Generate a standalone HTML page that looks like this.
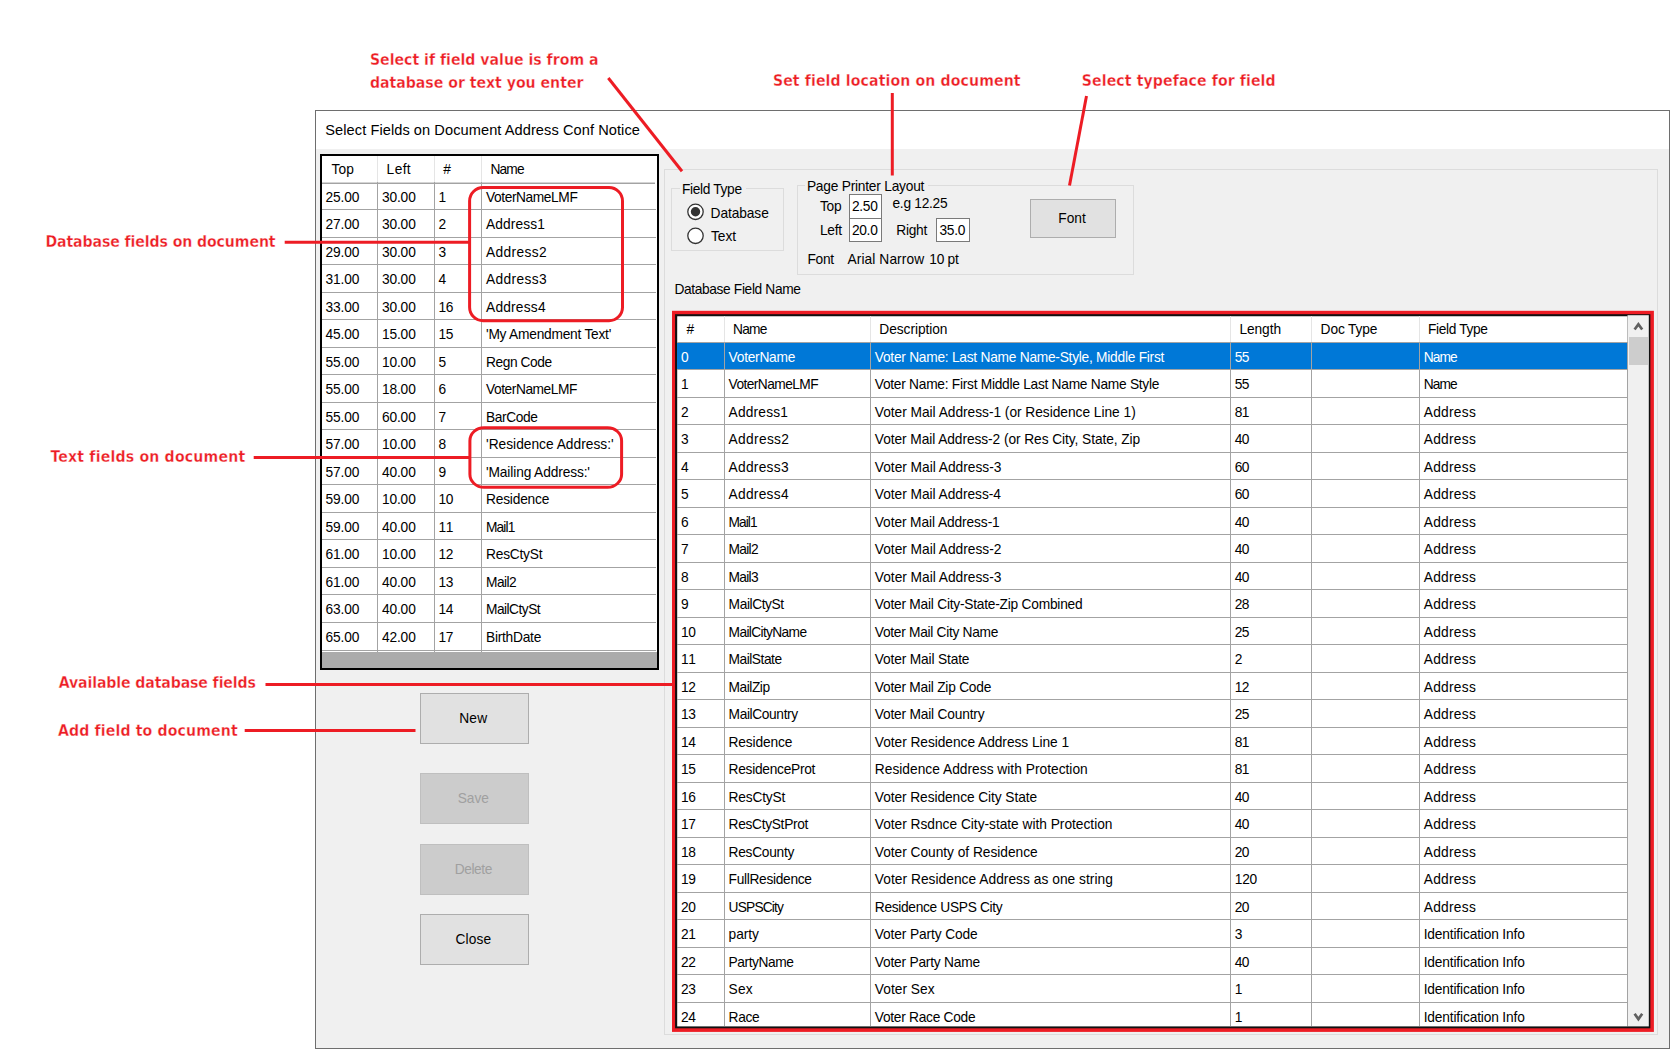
<!DOCTYPE html>
<html lang="en">
<head>
<meta charset="utf-8">
<title>Select Fields on Document Address Conf Notice</title>
<style>
html,body{margin:0;padding:0;background:#fff;}
body{width:1677px;height:1057px;position:relative;overflow:hidden;font-family:"Liberation Sans",sans-serif;font-size:13.75px;color:#000;letter-spacing:-0.28px;}
#app{position:absolute;left:0;top:0;width:1677px;height:1057px;overflow:hidden;}
#app div,#app span,#app label,#app button,#app h1,#app p{position:absolute;margin:0;padding:0;box-sizing:border-box;white-space:pre;line-height:1;font-size:13.75px;font-weight:normal;}
#app .ann{color:#ed1c24;font-family:"DejaVu Sans Condensed","DejaVu Sans","Liberation Sans",sans-serif;font-weight:bold;font-size:15.7px;-webkit-text-stroke:0.28px #fff;}
#app .title{font-size:14.6px;color:#000;letter-spacing:0.07px;}
#app .win{border:1px solid #6e6e6e;background:#f0f0f0;}
#app .gb{border:1px solid #dcdcdc;}
#app .gbl{background:#f0f0f0;}
#app .hl{background:#a3a3a3;height:1px;}
#app .vl{background:#a3a3a3;width:1px;}
#app .hvl{background:#e5e5e5;width:1px;}
#app .btn{background:#e1e1e1;border:1px solid #adadad;text-align:center;font-family:inherit;color:#000;letter-spacing:0.3px;padding:0 2px 0 0;overflow:hidden;}
#app .btn.dis{background:#cccccc;border-color:#bfbfbf;color:#a0a0a0;}
#app .inp{background:#fff;border:1px solid #7a7a7a;}
#app .sel{color:#fff;}
svg{position:absolute;left:0;top:0;}
</style>
</head>
<body>
<div id="app">

<div class="win" style="left:315.00px;top:110.00px;width:1355.00px;height:939.00px;"></div>
<div style="left:316.00px;top:111.00px;width:1353.00px;height:38.00px;background:#fff;"></div>
<h1 class="title" style="left:325.30px;top:122.92px;">Select Fields on Document Address Conf Notice</h1>
<div class="lb" style="left:320.00px;top:154.00px;width:339.00px;height:516.00px;background:#ababab;border:2px solid #000;"></div>
<div style="left:322.00px;top:156.00px;width:335.00px;height:496.00px;background:#fff;"></div>
<div class="hvl" style="left:377.00px;top:156.00px;width:1.00px;height:26.00px;"></div>
<div class="hvl" style="left:433.50px;top:156.00px;width:1.00px;height:26.00px;"></div>
<div class="hvl" style="left:480.75px;top:156.00px;width:1.00px;height:26.00px;"></div>
<span style="left:331.50px;top:163.36px;letter-spacing:0.120px;">Top</span>
<span style="left:386.60px;top:163.36px;letter-spacing:0.387px;">Left</span>
<span style="left:443.30px;top:163.36px;">#</span>
<span style="left:490.50px;top:163.36px;letter-spacing:-0.879px;">Name</span>
<div class="hl" style="left:322.00px;top:181.70px;width:333.00px;height:1.00px;background:#d4d4d4;"></div>
<div class="hl" style="left:322.00px;top:182.70px;width:332.60px;height:1.00px;"></div>
<div class="hl" style="left:322.00px;top:209.00px;width:334.00px;height:1.00px;"></div>
<div class="hl" style="left:322.00px;top:236.50px;width:334.00px;height:1.00px;"></div>
<div class="hl" style="left:322.00px;top:264.00px;width:334.00px;height:1.00px;"></div>
<div class="hl" style="left:322.00px;top:291.50px;width:334.00px;height:1.00px;"></div>
<div class="hl" style="left:322.00px;top:319.00px;width:334.00px;height:1.00px;"></div>
<div class="hl" style="left:322.00px;top:346.50px;width:334.00px;height:1.00px;"></div>
<div class="hl" style="left:322.00px;top:374.00px;width:334.00px;height:1.00px;"></div>
<div class="hl" style="left:322.00px;top:401.50px;width:334.00px;height:1.00px;"></div>
<div class="hl" style="left:322.00px;top:429.00px;width:334.00px;height:1.00px;"></div>
<div class="hl" style="left:322.00px;top:456.50px;width:334.00px;height:1.00px;"></div>
<div class="hl" style="left:322.00px;top:484.00px;width:334.00px;height:1.00px;"></div>
<div class="hl" style="left:322.00px;top:511.50px;width:334.00px;height:1.00px;"></div>
<div class="hl" style="left:322.00px;top:539.00px;width:334.00px;height:1.00px;"></div>
<div class="hl" style="left:322.00px;top:566.50px;width:334.00px;height:1.00px;"></div>
<div class="hl" style="left:322.00px;top:594.00px;width:334.00px;height:1.00px;"></div>
<div class="hl" style="left:322.00px;top:621.50px;width:334.00px;height:1.00px;"></div>
<div class="hl" style="left:322.00px;top:650.10px;width:334.00px;height:1.00px;"></div>
<div class="vl" style="left:377.00px;top:182.00px;width:1.00px;height:470.00px;"></div>
<div class="vl" style="left:433.50px;top:182.00px;width:1.00px;height:470.00px;"></div>
<div class="vl" style="left:480.75px;top:182.00px;width:1.00px;height:470.00px;"></div>
<span style="left:325.60px;top:190.80px;letter-spacing:-0.180px;">25.00</span>
<span style="left:381.90px;top:190.80px;letter-spacing:-0.130px;">30.00</span>
<span style="left:438.60px;top:190.80px;">1</span>
<span style="left:486.00px;top:190.80px;letter-spacing:-0.408px;">VoterNameLMF</span>
<span style="left:325.60px;top:218.30px;letter-spacing:-0.180px;">27.00</span>
<span style="left:381.90px;top:218.30px;letter-spacing:-0.130px;">30.00</span>
<span style="left:438.60px;top:218.30px;">2</span>
<span style="left:486.00px;top:218.30px;letter-spacing:0.118px;">Address1</span>
<span style="left:325.60px;top:245.80px;letter-spacing:-0.180px;">29.00</span>
<span style="left:381.90px;top:245.80px;letter-spacing:-0.130px;">30.00</span>
<span style="left:438.60px;top:245.80px;">3</span>
<span style="left:486.00px;top:245.80px;letter-spacing:0.350px;">Address2</span>
<span style="left:325.60px;top:273.30px;letter-spacing:-0.180px;">31.00</span>
<span style="left:381.90px;top:273.30px;letter-spacing:-0.130px;">30.00</span>
<span style="left:438.60px;top:273.30px;">4</span>
<span style="left:486.00px;top:273.30px;letter-spacing:0.350px;">Address3</span>
<span style="left:325.60px;top:300.80px;letter-spacing:-0.180px;">33.00</span>
<span style="left:381.90px;top:300.80px;letter-spacing:-0.130px;">30.00</span>
<span style="left:438.60px;top:300.80px;letter-spacing:-0.480px;">16</span>
<span style="left:486.00px;top:300.80px;letter-spacing:0.207px;">Address4</span>
<span style="left:325.60px;top:328.30px;letter-spacing:-0.180px;">45.00</span>
<span style="left:381.90px;top:328.30px;letter-spacing:-0.130px;">15.00</span>
<span style="left:438.60px;top:328.30px;letter-spacing:-0.480px;">15</span>
<span style="left:486.00px;top:328.30px;letter-spacing:-0.236px;">'My Amendment Text'</span>
<span style="left:325.60px;top:355.80px;letter-spacing:-0.180px;">55.00</span>
<span style="left:381.90px;top:355.80px;letter-spacing:-0.130px;">10.00</span>
<span style="left:438.60px;top:355.80px;">5</span>
<span style="left:486.00px;top:355.80px;letter-spacing:-0.433px;">Regn Code</span>
<span style="left:325.60px;top:383.30px;letter-spacing:-0.180px;">55.00</span>
<span style="left:381.90px;top:383.30px;letter-spacing:-0.130px;">18.00</span>
<span style="left:438.60px;top:383.30px;">6</span>
<span style="left:486.00px;top:383.30px;letter-spacing:-0.442px;">VoterNameLMF</span>
<span style="left:325.60px;top:410.80px;letter-spacing:-0.180px;">55.00</span>
<span style="left:381.90px;top:410.80px;letter-spacing:-0.130px;">60.00</span>
<span style="left:438.60px;top:410.80px;">7</span>
<span style="left:486.00px;top:410.80px;letter-spacing:-0.382px;">BarCode</span>
<span style="left:325.60px;top:438.30px;letter-spacing:-0.180px;">57.00</span>
<span style="left:381.90px;top:438.30px;letter-spacing:-0.130px;">10.00</span>
<span style="left:438.60px;top:438.30px;">8</span>
<span style="left:486.00px;top:438.30px;letter-spacing:0.003px;">'Residence Address:'</span>
<span style="left:325.60px;top:465.80px;letter-spacing:-0.180px;">57.00</span>
<span style="left:381.90px;top:465.80px;letter-spacing:-0.130px;">40.00</span>
<span style="left:438.60px;top:465.80px;">9</span>
<span style="left:486.00px;top:465.80px;letter-spacing:-0.127px;">'Mailing Address:'</span>
<span style="left:325.60px;top:493.30px;letter-spacing:-0.180px;">59.00</span>
<span style="left:381.90px;top:493.30px;letter-spacing:-0.130px;">10.00</span>
<span style="left:438.60px;top:493.30px;letter-spacing:-0.480px;">10</span>
<span style="left:486.00px;top:493.30px;letter-spacing:-0.202px;">Residence</span>
<span style="left:325.60px;top:520.80px;letter-spacing:-0.180px;">59.00</span>
<span style="left:381.90px;top:520.80px;letter-spacing:-0.130px;">40.00</span>
<span style="left:438.60px;top:520.80px;letter-spacing:0.520px;">11</span>
<span style="left:486.00px;top:520.80px;letter-spacing:-0.880px;">Mail1</span>
<span style="left:325.60px;top:548.30px;letter-spacing:-0.180px;">61.00</span>
<span style="left:381.90px;top:548.30px;letter-spacing:-0.130px;">10.00</span>
<span style="left:438.60px;top:548.30px;letter-spacing:-0.480px;">12</span>
<span style="left:486.00px;top:548.30px;letter-spacing:-0.224px;">ResCtySt</span>
<span style="left:325.60px;top:575.80px;letter-spacing:-0.180px;">61.00</span>
<span style="left:381.90px;top:575.80px;letter-spacing:-0.130px;">40.00</span>
<span style="left:438.60px;top:575.80px;letter-spacing:-0.480px;">13</span>
<span style="left:486.00px;top:575.80px;letter-spacing:-0.530px;">Mail2</span>
<span style="left:325.60px;top:603.30px;letter-spacing:-0.180px;">63.00</span>
<span style="left:381.90px;top:603.30px;letter-spacing:-0.130px;">40.00</span>
<span style="left:438.60px;top:603.30px;letter-spacing:-0.480px;">14</span>
<span style="left:486.00px;top:603.30px;letter-spacing:-0.530px;">MailCtySt</span>
<span style="left:325.60px;top:630.80px;letter-spacing:-0.180px;">65.00</span>
<span style="left:381.90px;top:630.80px;letter-spacing:-0.130px;">42.00</span>
<span style="left:438.60px;top:630.80px;letter-spacing:-0.480px;">17</span>
<span style="left:486.00px;top:630.80px;letter-spacing:-0.252px;">BirthDate</span>
<button class="btn" style="left:420.00px;top:693.00px;width:108.70px;height:50.90px;line-height:49.50px;letter-spacing:0.3px;">New</button>
<button class="btn dis" style="left:420.00px;top:773.20px;width:108.70px;height:50.80px;line-height:49.40px;letter-spacing:0.0px;">Save</button>
<button class="btn dis" style="left:420.00px;top:844.20px;width:108.70px;height:50.80px;line-height:49.40px;letter-spacing:-0.4px;">Delete</button>
<button class="btn" style="left:420.00px;top:914.40px;width:108.70px;height:50.80px;line-height:49.40px;letter-spacing:0.1px;">Close</button>
<div class="gb" style="left:664.00px;top:169.00px;width:993.50px;height:865.50px;"></div>
<div class="gb" style="left:671.25px;top:188.00px;width:112.50px;height:62.50px;"></div>
<div class="gbl" style="left:679.50px;top:180.00px;width:66.00px;height:16.00px;"></div>
<span style="left:682.00px;top:182.50px;letter-spacing:-0.346px;">Field Type</span>
<svg width="1677" height="1057" viewBox="0 0 1677 1057" style="pointer-events:none">
<circle cx="695.5" cy="211.8" r="7.7" fill="#fff" stroke="#333" stroke-width="1.3"/>
<circle cx="695.5" cy="211.8" r="4.7" fill="#333"/>
<circle cx="695.5" cy="235.8" r="7.7" fill="#fff" stroke="#333" stroke-width="1.3"/>
</svg>
<label style="left:710.60px;top:206.50px;letter-spacing:-0.093px;">Database</label>
<label style="left:711.00px;top:230.00px;letter-spacing:-0.013px;">Text</label>
<div class="gb" style="left:796.60px;top:185.40px;width:337.00px;height:89.20px;"></div>
<div class="gbl" style="left:804.50px;top:178.00px;width:123.50px;height:16.00px;"></div>
<span style="left:806.90px;top:179.60px;letter-spacing:-0.224px;">Page Printer Layout</span>
<span style="left:820.00px;top:199.60px;">Top</span>
<span style="left:820.00px;top:223.75px;">Left</span>
<div class="inp" style="left:849.00px;top:194.40px;width:33.00px;height:24.30px;"></div>
<div class="inp" style="left:849.00px;top:217.90px;width:33.00px;height:24.50px;"></div>
<div class="inp" style="left:936.00px;top:217.90px;width:33.50px;height:24.50px;"></div>
<span style="left:851.90px;top:199.60px;">2.50</span>
<span style="left:851.90px;top:223.75px;">20.0</span>
<span style="left:939.50px;top:223.75px;">35.0</span>
<span style="left:892.50px;top:196.50px;">e.g 12.25</span>
<span style="left:896.25px;top:223.75px;">Right</span>
<span style="left:807.50px;top:252.50px;">Font</span>
<span style="left:847.50px;top:252.50px;letter-spacing:0.09px;">Arial Narrow</span>
<span style="left:929.30px;top:252.50px;">10 pt</span>
<button class="btn" style="left:1030.00px;top:199.10px;width:86.00px;height:38.50px;line-height:37.10px;letter-spacing:0.0px;">Font</button>
<span style="left:674.40px;top:282.75px;letter-spacing:-0.358px;">Database Field Name</span>
<svg width="1677" height="1057" viewBox="0 0 1677 1057" style="pointer-events:none">
<rect x="672" y="310.8" width="981.9" height="721.1" fill="#ed1c24"/>
<rect x="675.07" y="314.2" width="975.3" height="714.1" fill="#111"/>
<rect x="677.2" y="316.25" width="950.3" height="710.15" fill="#fff"/>
<rect x="1627.5" y="315.2" width="21.3" height="711.2" fill="#f0f0f0"/>
</svg>
<div class="hvl" style="left:723.90px;top:316.00px;width:1.00px;height:26.00px;"></div>
<div class="hvl" style="left:870.00px;top:316.00px;width:1.00px;height:26.00px;"></div>
<div class="hvl" style="left:1230.00px;top:316.00px;width:1.00px;height:26.00px;"></div>
<div class="hvl" style="left:1311.10px;top:316.00px;width:1.00px;height:26.00px;"></div>
<div class="hvl" style="left:1418.70px;top:316.00px;width:1.00px;height:26.00px;"></div>
<span style="left:686.60px;top:323.16px;">#</span>
<span style="left:733.10px;top:323.16px;letter-spacing:-0.812px;">Name</span>
<span style="left:879.30px;top:323.16px;letter-spacing:-0.060px;">Description</span>
<span style="left:1239.40px;top:323.16px;letter-spacing:-0.080px;">Length</span>
<span style="left:1320.60px;top:323.16px;letter-spacing:-0.137px;">Doc Type</span>
<span style="left:1428.00px;top:323.16px;letter-spacing:-0.367px;">Field Type</span>
<div style="left:677.00px;top:342.30px;width:950.00px;height:26.90px;background:#0078d7;"></div>
<div class="hl" style="left:677.00px;top:369.21px;width:950.00px;height:1.00px;"></div>
<div class="hl" style="left:677.00px;top:396.72px;width:950.00px;height:1.00px;"></div>
<div class="hl" style="left:677.00px;top:424.23px;width:950.00px;height:1.00px;"></div>
<div class="hl" style="left:677.00px;top:451.74px;width:950.00px;height:1.00px;"></div>
<div class="hl" style="left:677.00px;top:479.25px;width:950.00px;height:1.00px;"></div>
<div class="hl" style="left:677.00px;top:506.76px;width:950.00px;height:1.00px;"></div>
<div class="hl" style="left:677.00px;top:534.27px;width:950.00px;height:1.00px;"></div>
<div class="hl" style="left:677.00px;top:561.78px;width:950.00px;height:1.00px;"></div>
<div class="hl" style="left:677.00px;top:589.29px;width:950.00px;height:1.00px;"></div>
<div class="hl" style="left:677.00px;top:616.80px;width:950.00px;height:1.00px;"></div>
<div class="hl" style="left:677.00px;top:644.31px;width:950.00px;height:1.00px;"></div>
<div class="hl" style="left:677.00px;top:671.82px;width:950.00px;height:1.00px;"></div>
<div class="hl" style="left:677.00px;top:699.33px;width:950.00px;height:1.00px;"></div>
<div class="hl" style="left:677.00px;top:726.84px;width:950.00px;height:1.00px;"></div>
<div class="hl" style="left:677.00px;top:754.35px;width:950.00px;height:1.00px;"></div>
<div class="hl" style="left:677.00px;top:781.86px;width:950.00px;height:1.00px;"></div>
<div class="hl" style="left:677.00px;top:809.37px;width:950.00px;height:1.00px;"></div>
<div class="hl" style="left:677.00px;top:836.88px;width:950.00px;height:1.00px;"></div>
<div class="hl" style="left:677.00px;top:864.39px;width:950.00px;height:1.00px;"></div>
<div class="hl" style="left:677.00px;top:891.90px;width:950.00px;height:1.00px;"></div>
<div class="hl" style="left:677.00px;top:919.41px;width:950.00px;height:1.00px;"></div>
<div class="hl" style="left:677.00px;top:946.92px;width:950.00px;height:1.00px;"></div>
<div class="hl" style="left:677.00px;top:974.43px;width:950.00px;height:1.00px;"></div>
<div class="hl" style="left:677.00px;top:1001.94px;width:950.00px;height:1.00px;"></div>
<div class="hl" style="left:677.00px;top:341.50px;width:950.00px;height:1.00px;"></div>
<div class="vl" style="left:723.90px;top:342.00px;width:1.00px;height:684.40px;"></div>
<div class="vl" style="left:870.00px;top:342.00px;width:1.00px;height:684.40px;"></div>
<div class="vl" style="left:1230.00px;top:342.00px;width:1.00px;height:684.40px;"></div>
<div class="vl" style="left:1311.10px;top:342.00px;width:1.00px;height:684.40px;"></div>
<div class="vl" style="left:1418.70px;top:342.00px;width:1.00px;height:684.40px;"></div>
<div class="vl" style="left:1626.50px;top:342.00px;width:1.00px;height:684.40px;"></div>
<span class="sel" style="left:681.00px;top:350.76px;">0</span>
<span class="sel" style="left:728.60px;top:350.76px;letter-spacing:-0.252px;">VoterName</span>
<span class="sel" style="left:874.80px;top:350.76px;letter-spacing:-0.256px;">Voter Name: Last Name Name-Style, Middle First</span>
<span class="sel" style="left:1234.80px;top:350.76px;letter-spacing:-0.680px;">55</span>
<span class="sel" style="left:1423.70px;top:350.76px;letter-spacing:-0.880px;">Name</span>
<span style="left:681.00px;top:378.27px;">1</span>
<span style="left:728.60px;top:378.27px;letter-spacing:-0.570px;">VoterNameLMF</span>
<span style="left:874.80px;top:378.27px;letter-spacing:-0.270px;">Voter Name: First Middle Last Name Name Style</span>
<span style="left:1234.80px;top:378.27px;letter-spacing:-0.680px;">55</span>
<span style="left:1423.70px;top:378.27px;letter-spacing:-0.880px;">Name</span>
<span style="left:681.00px;top:405.78px;">2</span>
<span style="left:728.60px;top:405.78px;letter-spacing:0.179px;">Address1</span>
<span style="left:874.80px;top:405.78px;letter-spacing:-0.030px;">Voter Mail Address-1 (or Residence Line 1)</span>
<span style="left:1234.80px;top:405.78px;letter-spacing:-0.680px;">81</span>
<span style="left:1423.70px;top:405.78px;letter-spacing:0.285px;">Address</span>
<span style="left:681.00px;top:433.29px;">3</span>
<span style="left:728.60px;top:433.29px;letter-spacing:0.319px;">Address2</span>
<span style="left:874.80px;top:433.29px;letter-spacing:-0.075px;">Voter Mail Address-2 (or Res City, State, Zip</span>
<span style="left:1234.80px;top:433.29px;letter-spacing:-0.680px;">40</span>
<span style="left:1423.70px;top:433.29px;letter-spacing:0.285px;">Address</span>
<span style="left:681.00px;top:460.80px;">4</span>
<span style="left:728.60px;top:460.80px;letter-spacing:0.263px;">Address3</span>
<span style="left:874.80px;top:460.80px;letter-spacing:-0.017px;">Voter Mail Address-3</span>
<span style="left:1234.80px;top:460.80px;letter-spacing:-0.680px;">60</span>
<span style="left:1423.70px;top:460.80px;letter-spacing:0.285px;">Address</span>
<span style="left:681.00px;top:488.31px;">5</span>
<span style="left:728.60px;top:488.31px;letter-spacing:0.263px;">Address4</span>
<span style="left:874.80px;top:488.31px;letter-spacing:-0.037px;">Voter Mail Address-4</span>
<span style="left:1234.80px;top:488.31px;letter-spacing:-0.680px;">60</span>
<span style="left:1423.70px;top:488.31px;letter-spacing:0.285px;">Address</span>
<span style="left:681.00px;top:515.82px;">6</span>
<span style="left:728.60px;top:515.82px;letter-spacing:-0.980px;">Mail1</span>
<span style="left:874.80px;top:515.82px;letter-spacing:-0.100px;">Voter Mail Address-1</span>
<span style="left:1234.80px;top:515.82px;letter-spacing:-0.680px;">40</span>
<span style="left:1423.70px;top:515.82px;letter-spacing:0.285px;">Address</span>
<span style="left:681.00px;top:543.33px;">7</span>
<span style="left:728.60px;top:543.33px;letter-spacing:-0.730px;">Mail2</span>
<span style="left:874.80px;top:543.33px;letter-spacing:-0.017px;">Voter Mail Address-2</span>
<span style="left:1234.80px;top:543.33px;letter-spacing:-0.680px;">40</span>
<span style="left:1423.70px;top:543.33px;letter-spacing:0.285px;">Address</span>
<span style="left:681.00px;top:570.84px;">8</span>
<span style="left:728.60px;top:570.84px;letter-spacing:-0.730px;">Mail3</span>
<span style="left:874.80px;top:570.84px;letter-spacing:-0.017px;">Voter Mail Address-3</span>
<span style="left:1234.80px;top:570.84px;letter-spacing:-0.680px;">40</span>
<span style="left:1423.70px;top:570.84px;letter-spacing:0.285px;">Address</span>
<span style="left:681.00px;top:598.35px;">9</span>
<span style="left:728.60px;top:598.35px;letter-spacing:-0.405px;">MailCtySt</span>
<span style="left:874.80px;top:598.35px;letter-spacing:-0.232px;">Voter Mail City-State-Zip Combined</span>
<span style="left:1234.80px;top:598.35px;letter-spacing:-0.680px;">28</span>
<span style="left:1423.70px;top:598.35px;letter-spacing:0.285px;">Address</span>
<span style="left:681.00px;top:625.86px;letter-spacing:-0.280px;">10</span>
<span style="left:728.60px;top:625.86px;letter-spacing:-0.644px;">MailCityName</span>
<span style="left:874.80px;top:625.86px;letter-spacing:-0.293px;">Voter Mail City Name</span>
<span style="left:1234.80px;top:625.86px;letter-spacing:-0.680px;">25</span>
<span style="left:1423.70px;top:625.86px;letter-spacing:0.285px;">Address</span>
<span style="left:681.00px;top:653.37px;letter-spacing:0.720px;">11</span>
<span style="left:728.60px;top:653.37px;letter-spacing:-0.483px;">MailState</span>
<span style="left:874.80px;top:653.37px;letter-spacing:-0.159px;">Voter Mail State</span>
<span style="left:1234.80px;top:653.37px;">2</span>
<span style="left:1423.70px;top:653.37px;letter-spacing:0.285px;">Address</span>
<span style="left:681.00px;top:680.88px;letter-spacing:-0.280px;">12</span>
<span style="left:728.60px;top:680.88px;letter-spacing:-0.479px;">MailZip</span>
<span style="left:874.80px;top:680.88px;letter-spacing:-0.235px;">Voter Mail Zip Code</span>
<span style="left:1234.80px;top:680.88px;letter-spacing:-0.680px;">12</span>
<span style="left:1423.70px;top:680.88px;letter-spacing:0.285px;">Address</span>
<span style="left:681.00px;top:708.39px;letter-spacing:-0.280px;">13</span>
<span style="left:728.60px;top:708.39px;letter-spacing:-0.380px;">MailCountry</span>
<span style="left:874.80px;top:708.39px;letter-spacing:-0.198px;">Voter Mail Country</span>
<span style="left:1234.80px;top:708.39px;letter-spacing:-0.680px;">25</span>
<span style="left:1423.70px;top:708.39px;letter-spacing:0.285px;">Address</span>
<span style="left:681.00px;top:735.90px;letter-spacing:-0.280px;">14</span>
<span style="left:728.60px;top:735.90px;letter-spacing:-0.155px;">Residence</span>
<span style="left:874.80px;top:735.90px;letter-spacing:-0.046px;">Voter Residence Address Line 1</span>
<span style="left:1234.80px;top:735.90px;letter-spacing:-0.680px;">81</span>
<span style="left:1423.70px;top:735.90px;letter-spacing:0.285px;">Address</span>
<span style="left:681.00px;top:763.41px;letter-spacing:-0.280px;">15</span>
<span style="left:728.60px;top:763.41px;letter-spacing:-0.280px;">ResidenceProt</span>
<span style="left:874.80px;top:763.41px;letter-spacing:0.015px;">Residence Address with Protection</span>
<span style="left:1234.80px;top:763.41px;letter-spacing:-0.680px;">81</span>
<span style="left:1423.70px;top:763.41px;letter-spacing:0.285px;">Address</span>
<span style="left:681.00px;top:790.92px;letter-spacing:-0.280px;">16</span>
<span style="left:728.60px;top:790.92px;letter-spacing:-0.196px;">ResCtySt</span>
<span style="left:874.80px;top:790.92px;letter-spacing:-0.080px;">Voter Residence City State</span>
<span style="left:1234.80px;top:790.92px;letter-spacing:-0.680px;">40</span>
<span style="left:1423.70px;top:790.92px;letter-spacing:0.285px;">Address</span>
<span style="left:681.00px;top:818.43px;letter-spacing:-0.280px;">17</span>
<span style="left:728.60px;top:818.43px;letter-spacing:-0.317px;">ResCtyStProt</span>
<span style="left:874.80px;top:818.43px;letter-spacing:-0.021px;">Voter Rsdnce City-state with Protection</span>
<span style="left:1234.80px;top:818.43px;letter-spacing:-0.680px;">40</span>
<span style="left:1423.70px;top:818.43px;letter-spacing:0.285px;">Address</span>
<span style="left:681.00px;top:845.94px;letter-spacing:-0.280px;">18</span>
<span style="left:728.60px;top:845.94px;letter-spacing:-0.280px;">ResCounty</span>
<span style="left:874.80px;top:845.94px;letter-spacing:-0.030px;">Voter County of Residence</span>
<span style="left:1234.80px;top:845.94px;letter-spacing:-0.680px;">20</span>
<span style="left:1423.70px;top:845.94px;letter-spacing:0.285px;">Address</span>
<span style="left:681.00px;top:873.45px;letter-spacing:-0.280px;">19</span>
<span style="left:728.60px;top:873.45px;letter-spacing:-0.315px;">FullResidence</span>
<span style="left:874.80px;top:873.45px;letter-spacing:0.032px;">Voter Residence Address as one string</span>
<span style="left:1234.80px;top:873.45px;">120</span>
<span style="left:1423.70px;top:873.45px;letter-spacing:0.285px;">Address</span>
<span style="left:681.00px;top:900.96px;letter-spacing:-0.280px;">20</span>
<span style="left:728.60px;top:900.96px;letter-spacing:-0.823px;">USPSCity</span>
<span style="left:874.80px;top:900.96px;letter-spacing:-0.325px;">Residence USPS City</span>
<span style="left:1234.80px;top:900.96px;letter-spacing:-0.680px;">20</span>
<span style="left:1423.70px;top:900.96px;letter-spacing:0.285px;">Address</span>
<span style="left:681.00px;top:928.47px;letter-spacing:-0.280px;">21</span>
<span style="left:728.60px;top:928.47px;letter-spacing:-0.080px;">party</span>
<span style="left:874.80px;top:928.47px;letter-spacing:-0.119px;">Voter Party Code</span>
<span style="left:1234.80px;top:928.47px;">3</span>
<span style="left:1423.70px;top:928.47px;letter-spacing:-0.159px;">Identification Info</span>
<span style="left:681.00px;top:955.98px;letter-spacing:-0.280px;">22</span>
<span style="left:728.60px;top:955.98px;letter-spacing:-0.433px;">PartyName</span>
<span style="left:874.80px;top:955.98px;letter-spacing:-0.213px;">Voter Party Name</span>
<span style="left:1234.80px;top:955.98px;letter-spacing:-0.680px;">40</span>
<span style="left:1423.70px;top:955.98px;letter-spacing:-0.159px;">Identification Info</span>
<span style="left:681.00px;top:983.49px;letter-spacing:-0.280px;">23</span>
<span style="left:728.60px;top:983.49px;letter-spacing:0.120px;">Sex</span>
<span style="left:874.80px;top:983.49px;letter-spacing:0.017px;">Voter Sex</span>
<span style="left:1234.80px;top:983.49px;">1</span>
<span style="left:1423.70px;top:983.49px;letter-spacing:-0.159px;">Identification Info</span>
<span style="left:681.00px;top:1011.00px;letter-spacing:-0.280px;">24</span>
<span style="left:728.60px;top:1011.00px;letter-spacing:-0.346px;">Race</span>
<span style="left:874.80px;top:1011.00px;letter-spacing:-0.280px;">Voter Race Code</span>
<span style="left:1234.80px;top:1011.00px;">1</span>
<span style="left:1423.70px;top:1011.00px;letter-spacing:-0.159px;">Identification Info</span>
<div style="left:1629.00px;top:336.60px;width:18.70px;height:28.10px;background:#cdcdcd;"></div>
<p class="ann" style="left:369.90px;top:52.14px;letter-spacing:0.002px;">Select if field value is from a</p>
<p class="ann" style="left:369.90px;top:74.94px;letter-spacing:-0.012px;">database or text you enter</p>
<p class="ann" style="left:772.90px;top:72.94px;letter-spacing:0.113px;">Set field location on document</p>
<p class="ann" style="left:1081.80px;top:72.94px;letter-spacing:0.098px;">Select typeface for field</p>
<p class="ann" style="left:45.40px;top:234.14px;letter-spacing:-0.098px;">Database fields on document</p>
<p class="ann" style="left:50.60px;top:449.19px;letter-spacing:0.179px;">Text fields on document</p>
<p class="ann" style="left:58.80px;top:674.94px;letter-spacing:-0.120px;">Available database fields</p>
<p class="ann" style="left:57.90px;top:722.94px;letter-spacing:0.134px;">Add field to document</p>
<svg width="1677" height="1057" viewBox="0 0 1677 1057" fill="none" stroke="#ed1c24" stroke-width="3" style="pointer-events:none;">
<line x1="608.3" y1="78" x2="682" y2="171.3"/>
<line x1="892.3" y1="93" x2="892.3" y2="175.5"/>
<line x1="1086.5" y1="96" x2="1069.5" y2="185.5"/>
<line x1="284.7" y1="242.3" x2="469" y2="242.3"/>
<line x1="253.7" y1="457.6" x2="469" y2="457.6"/>
<line x1="265.5" y1="684.5" x2="673" y2="684.5"/>
<line x1="244.7" y1="730.5" x2="415.5" y2="730.5"/>
<rect x="469.6" y="187.6" width="152.9" height="133.1" rx="13.5" ry="13.5"/>
<rect x="469.9" y="427.7" width="151.7" height="59.6" rx="14" ry="13"/>
<polyline points="1634.6,329.5 1638.4,324.2 1642.2,329.5" stroke="#606060" stroke-width="2.7"/>
<polyline points="1634.6,1013.8 1638.4,1019.1 1642.2,1013.8" stroke="#606060" stroke-width="2.7"/>
</svg>
</div>
</body>
</html>
